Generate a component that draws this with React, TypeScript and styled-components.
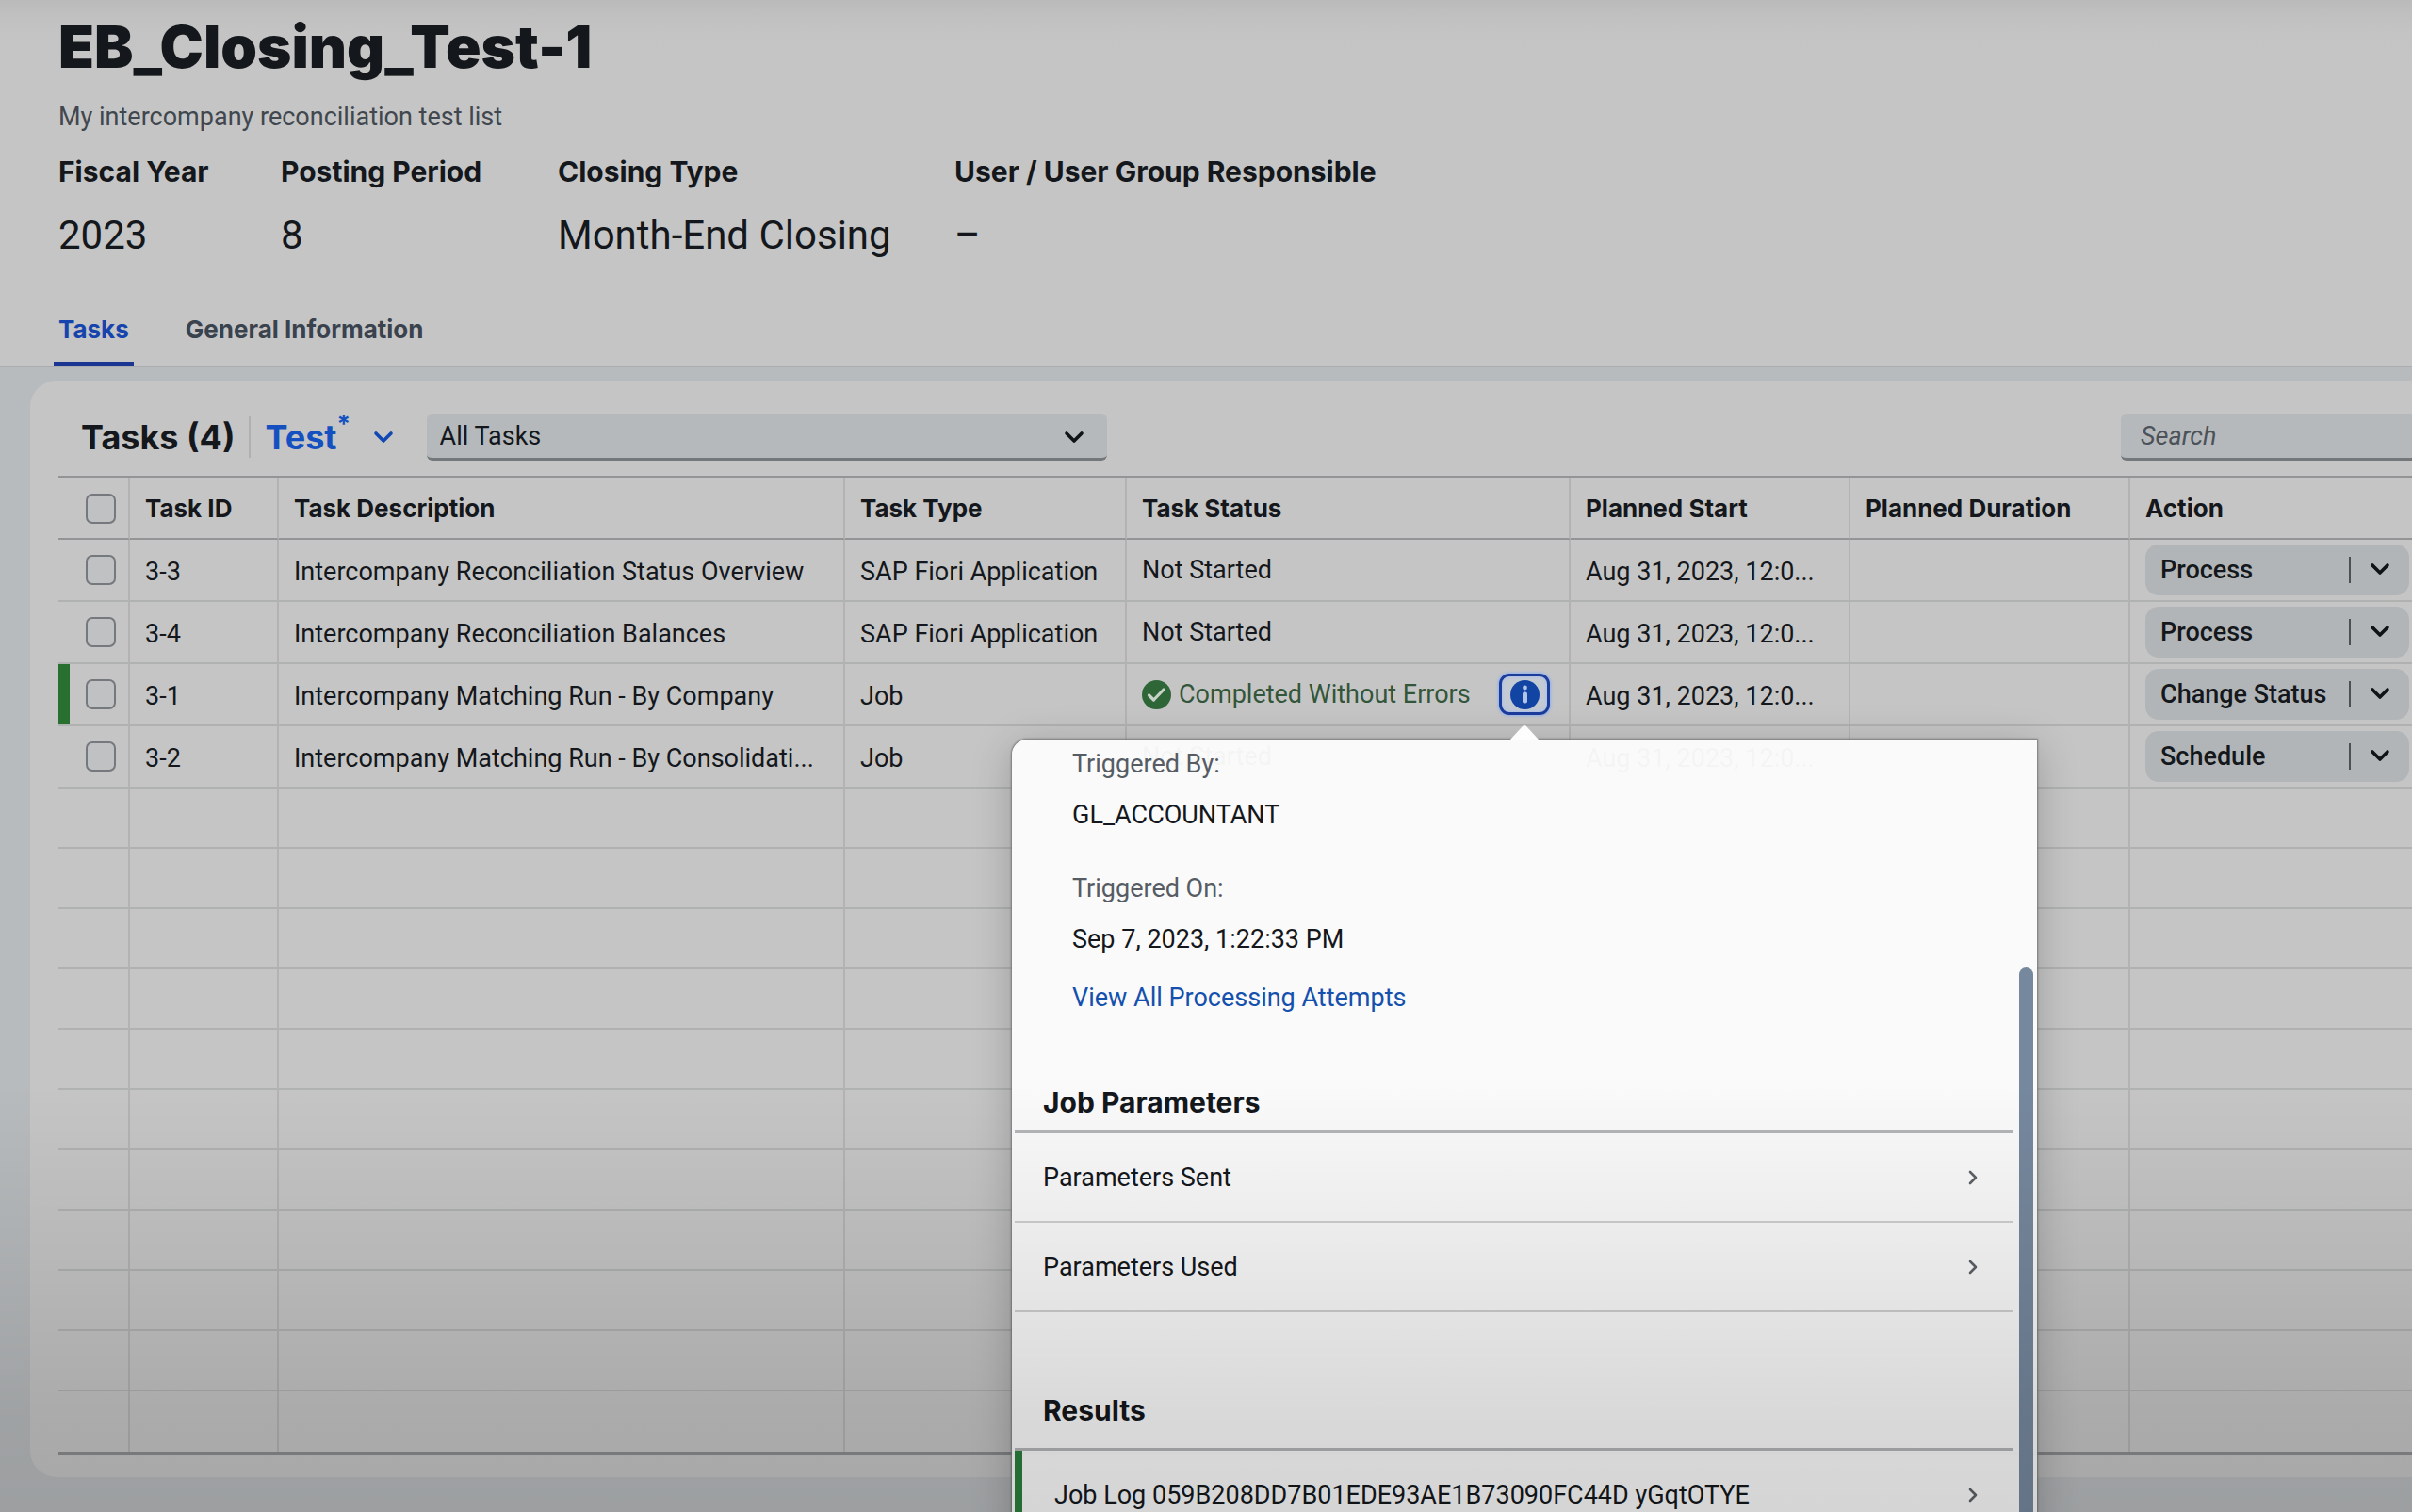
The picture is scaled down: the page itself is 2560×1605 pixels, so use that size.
import React from 'react';
import styled, { createGlobalStyle, css } from 'styled-components';

const ink = '#14171b';
const blue = '#1248b4';
const strong = 'Inter, "Open Sans", sans-serif';

const GlobalStyle = createGlobalStyle`
  *, *::before, *::after { box-sizing: border-box; }
  body {
    margin: 0;
    overflow: hidden;
    background: #b8bbbd;
    color: ${ink};
    font-family: Roboto, "Open Sans", sans-serif;
    font-size: 27px;
    line-height: 32px;
  }
  button, input, select { font: inherit; color: inherit; }
  h1, h2, h3, p, dl, dd, dt, ul { margin: 0; padding: 0; font-weight: inherit; }
`;

const Page = styled.div`
  position: relative;
  height: 100vh;
  overflow: hidden;
`;

const BottomShade = styled.div`
  position: absolute;
  inset: auto 0 0 0;
  z-index: 3;
  height: 455px;
  pointer-events: none;
  background: linear-gradient(rgba(0, 0, 0, 0), rgba(0, 0, 0, 0.075) 44%, rgba(0, 0, 0, 0.135) 77%, rgba(0, 0, 0, 0.15));
`;

const Header = styled.header`
  padding: 12px 62px 0;
  border-bottom: 2px solid #abacb0;
  background: linear-gradient(#bababa, #bfbfbf 12px, #c4c4c4 36px, #c5c5c5 70px);
`;

const Title = styled.h1`
  font-family: ${strong};
  font-size: 62px;
  line-height: 76px;
  font-weight: 900;
`;

const Subtitle = styled.p`
  padding-top: 20px;
  color: #41474e;
`;

const Facts = styled.dl`
  display: grid;
  grid-template-columns: 236px 294px 421px auto;
  padding-top: 22px;
`;

const FactLabel = styled.dt`
  font-family: ${strong};
  font-size: 30px;
  line-height: 40px;
  font-weight: 700;
`;

const FactValue = styled.dd`
  padding-top: 20px;
  font-size: 42px;
  line-height: 56px;
`;

const TabBar = styled.nav`
  display: flex;
  gap: 50px;
  padding-top: 44px;
  margin-left: -5px;
`;

const Tab = styled.button<{ $active?: boolean }>`
  border: 0;
  border-bottom: 4px solid ${(p) => (p.$active ? '#1a3692' : 'transparent')};
  padding: 12px 5px 18px;
  background: none;
  font-family: ${strong};
  font-size: 26px;
  font-weight: 700;
  color: ${(p) => (p.$active ? '#1644ae' : '#39424d')};
`;

const Card = styled.section`
  margin: 14px 0 0 32px;
  padding: 35px 0 24px 30px;
  border-radius: 28px 0 0 28px;
  background: #c5c5c5;
`;

const Toolbar = styled.div`
  display: flex;
  align-items: center;
  padding-left: 24px;
  height: 50px;
  margin-bottom: 16px;
`;

const ToolbarTitle = styled.h2`
  font-family: ${strong};
  font-size: 36px;
  line-height: 44px;
  font-weight: 700;
  padding-right: 14px;
  border-right: 2px solid #b0b0b2;
`;

const VariantButton = styled.button`
  display: flex;
  align-items: center;
  flex: none;
  width: 187px;
  border: 0;
  padding: 0 0 0 16px;
  background: none;
  font-family: ${strong};
  font-size: 36px;
  line-height: 44px;
  font-weight: 700;
  color: #1450c0;

  sup {
    align-self: flex-start;
    width: 38px;
    font-size: 26px;
    line-height: 16px;
    text-align: left;
  }
`;

const field = css`
  height: 50px;
  border: 0;
  border-bottom: 3px solid #75787b;
  border-radius: 6px;
  background: #b6b9bb;
`;

const SelectWrap = styled.div`
  display: grid;
  align-items: center;
  width: 722px;

  > * { grid-area: 1 / 1; }
  > svg { justify-self: end; margin-right: 24px; pointer-events: none; }
`;

const FilterSelect = styled.select`
  ${field}
  width: 100%;
  padding: 0 14px;
  appearance: none;
`;

const SearchInput = styled.input`
  ${field}
  width: 309px;
  margin-left: auto;
  padding: 0 21px;
  border-radius: 6px 0 0 6px;

  &::placeholder { color: #4c5259; font-style: italic; opacity: 1; }
`;

const TaskTable = styled.table`
  width: 100%;
  table-layout: fixed;
  border-collapse: separate;
  border-spacing: 0;
  border-top: 2px solid #929496;
  border-bottom: 3px solid #8b8d8f;
`;

const Col = styled.col<{ $w?: number }>`
  width: ${(p) => (p.$w ? `${p.$w}px` : 'auto')};
`;

const cell = css`
  padding: 0 16px;
  text-align: left;
  white-space: nowrap;
  border-right: 2px solid #b3b3b4;
  &:last-child { border-right: 0; padding-right: 0; }
`;

const HeadCell = styled.th`
  ${cell}
  height: 66px;
  padding-top: 2px;
  font-family: ${strong};
  font-size: 26px;
  font-weight: 700;
  border-bottom: 2px solid #929496;
`;

const Cell = styled.td<{ $open?: boolean; $text?: boolean; $marked?: boolean }>`
  ${cell}
  height: 66px;
  padding-top: ${(p) => (p.$text ? '3px' : '0')};
  border-bottom: 2px solid #b0b1b1;
  overflow: ${(p) => (p.$open ? 'visible' : 'hidden')};
  text-overflow: ellipsis;
  box-shadow: ${(p) => (p.$marked ? 'inset 12px 0 #27702f' : 'none')};
`;

const EmptyCell = styled.td`
  ${cell}
  height: 64px;
  border-bottom: 2px solid #b0b1b1;
  tr:last-child > & { border-bottom: 0; }
`;

const Check = styled.input`
  display: block;
  appearance: none;
  width: 32px;
  height: 32px;
  margin: 0 0 0 13px;
  border: 2px solid #75787c;
  border-radius: 7px;
  background: #bfc1c2;
`;

const StatusLine = styled.div`
  display: flex;
  align-items: center;
`;

const StatusOk = styled.span`
  display: flex;
  align-items: center;
  gap: 8px;
  color: #33553a;
`;

const PopoverAnchor = styled.div`
  position: relative;
  margin-left: auto;
  margin-right: 4px;
`;

const InfoButton = styled.button`
  display: flex;
  align-items: center;
  justify-content: center;
  width: 54px;
  height: 44px;
  padding: 0;
  border: 3px solid #1c3c9c;
  border-radius: 11px;
  background: #c4cad4;
  box-shadow: 0 0 3px 1px #8fb0ee, inset 0 0 3px 1px #a9c0ee;
`;

const Popover = styled.aside`
  position: absolute;
  top: 70px;
  left: 50%;
  z-index: 2;
  width: 1088px;
  margin-left: -544px;
  padding: 0 26px 0 3px;
  border-radius: 16px 0 0 0;
  background: rgba(252, 252, 252, 0.97);
  box-shadow: 0 0 2px 1px #77797c, 0 8px 44px rgba(0, 0, 0, 0.22);
  white-space: nowrap;
`;

const Arrow = styled.svg`
  position: absolute;
  top: -16px;
  left: 50%;
  margin-left: -16px;
`;

const ScrollThumb = styled.div`
  position: absolute;
  top: 242px;
  right: 4px;
  bottom: 0;
  width: 15px;
  border-radius: 8px;
  background: #76889e;
`;

const Trigger = styled.dl`
  padding: 10px 0 0 61px;
`;

const TriggerLabel = styled.dt`
  color: #555c64;
`;

const TriggerValue = styled.dd`
  padding: 22px 0 46px;
  &:last-child { padding-bottom: 30px; }
`;

const AttemptsLink = styled.a`
  display: block;
  padding-left: 61px;
  color: #1450ae;
  text-decoration: none;
`;

const GroupTitle = styled.h3<{ $above: number; $below: number }>`
  padding: ${(p) => p.$above}px 0 ${(p) => p.$below}px 30px;
  font-family: ${strong};
  font-size: 30px;
  line-height: 40px;
  font-weight: 700;
  border-bottom: 3px solid #b4b5b6;
`;

const NavList = styled.ul`
  list-style: none;
`;

const NavItem = styled.button<{ $ok?: boolean }>`
  display: flex;
  align-items: center;
  justify-content: space-between;
  width: 100%;
  height: 95px;
  border: 0;
  border-bottom: 2px solid #d0d0d0;
  padding: 0 36px 0 ${(p) => (p.$ok ? 34 : 30)}px;
  border-left: ${(p) => (p.$ok ? '8px solid #2a7f3c' : '0')};
  background: none;
`;

const Split = styled.div`
  display: flex;
  align-items: center;
  width: 280px;
  height: 54px;
  border-radius: 14px;
  background: #b2b5b7;
`;

const SplitMain = styled.button`
  flex: 1;
  height: 28px;
  padding: 0 0 0 16px;
  border: 0;
  border-right: 2px solid #4c5054;
  background: none;
  text-align: left;
  line-height: 28px;
  font-weight: 500;
`;

const SplitMenu = styled.button`
  display: flex;
  align-items: center;
  justify-content: center;
  width: 62px;
  height: 54px;
  border: 0;
  padding: 0 0 2px;
  background: none;
`;

const ChevronDown = ({ color = '#101316' }: { color?: string }) => (
  <svg width="22" height="14" viewBox="0 0 22 14" fill="none" stroke={color} strokeWidth="3.6" strokeLinecap="round" strokeLinejoin="round">
    <path d="M3 3l8 8 8-8" />
  </svg>
);

const ChevronRight = () => (
  <svg width="12" height="16" viewBox="0 0 12 16" fill="none" stroke="#5d6268" strokeWidth="2.6" strokeLinecap="round" strokeLinejoin="round">
    <path d="M3 2l6 6-6 6" />
  </svg>
);

const OkIcon = () => (
  <svg width="31" height="31" viewBox="0 0 31 31">
    <circle cx="15.5" cy="15.5" r="15.5" fill="#2f6638" />
    <path d="M7.5 16l5 5L23 10" fill="none" stroke="#c6d3c6" strokeWidth="3.2" strokeLinecap="round" strokeLinejoin="round" />
  </svg>
);

const InfoIcon = () => (
  <svg width="31" height="31" viewBox="0 0 31 31">
    <circle cx="15.5" cy="15.5" r="15.5" fill="#1244a4" />
    <circle cx="15.5" cy="8" r="2.4" fill="#b4c6e6" />
    <rect x="13" y="12.5" width="5" height="12" rx="2" fill="#b4c6e6" />
  </svg>
);

type Task = { id: string; description: string; type: string; status: string; start: string; action: string; done?: boolean };

const tasks: Task[] = [
  { id: '3-3', description: 'Intercompany Reconciliation Status Overview', type: 'SAP Fiori Application', status: 'Not Started', start: 'Aug 31, 2023, 12:0...', action: 'Process' },
  { id: '3-4', description: 'Intercompany Reconciliation Balances', type: 'SAP Fiori Application', status: 'Not Started', start: 'Aug 31, 2023, 12:0...', action: 'Process' },
  { id: '3-1', description: 'Intercompany Matching Run - By Company', type: 'Job', status: 'Completed Without Errors', start: 'Aug 31, 2023, 12:0...', action: 'Change Status', done: true },
  { id: '3-2', description: 'Intercompany Matching Run - By Consolidati...', type: 'Job', status: 'Not Started', start: 'Aug 31, 2023, 12:0...', action: 'Schedule' },
];

const facts = [
  ['Fiscal Year', '2023'],
  ['Posting Period', '8'],
  ['Closing Type', 'Month-End Closing'],
  ['User / User Group Responsible', '–'],
];

const headings = ['Task ID', 'Task Description', 'Task Type', 'Task Status', 'Planned Start', 'Planned Duration', 'Action'];
const widths = [76, 158, 601, 299, 471, 297, 297];

const JobPopover = () => (
  <Popover role="dialog" aria-label="Job details">
    <Arrow width="32" height="17" viewBox="0 0 32 17">
      <path d="M0 17L14 2q2-2 4 0l14 15z" fill="#fdfdfd" />
    </Arrow>
    <Trigger>
      <TriggerLabel>Triggered By:</TriggerLabel>
      <TriggerValue>GL_ACCOUNTANT</TriggerValue>
      <TriggerLabel>Triggered On:</TriggerLabel>
      <TriggerValue>Sep 7, 2023, 1:22:33 PM</TriggerValue>
    </Trigger>
    <AttemptsLink href="#attempts">View All Processing Attempts</AttemptsLink>
    <GroupTitle $above={75} $below={10}>Job Parameters</GroupTitle>
    <NavList>
      <li><NavItem>Parameters Sent<ChevronRight /></NavItem></li>
      <li><NavItem>Parameters Used<ChevronRight /></NavItem></li>
    </NavList>
    <GroupTitle $above={84} $below={20}>Results</GroupTitle>
    <NavList>
      <li><NavItem $ok>Job Log 059B208DD7B01EDE93AE1B73090FC44D yGqtOTYE<ChevronRight /></NavItem></li>
    </NavList>
    <ScrollThumb />
  </Popover>
);

const TaskRow = ({ task }: { task: Task }) => (
  <tr>
    <Cell $marked={task.done}><Check type="checkbox" aria-label={`Select task ${task.id}`} /></Cell>
    <Cell $text>{task.id}</Cell>
    <Cell $text>{task.description}</Cell>
    <Cell $text>{task.type}</Cell>
    <Cell $open={task.done}>
      {task.done ? (
        <StatusLine>
          <StatusOk><OkIcon />{task.status}</StatusOk>
          <PopoverAnchor>
            <InfoButton aria-label="Show job details"><InfoIcon /></InfoButton>
            <JobPopover />
          </PopoverAnchor>
        </StatusLine>
      ) : task.status}
    </Cell>
    <Cell $text>{task.start}</Cell>
    <Cell />
    <Cell>
      <Split>
        <SplitMain>{task.action}</SplitMain>
        <SplitMenu aria-label={`More actions for ${task.id}`}><ChevronDown /></SplitMenu>
      </Split>
    </Cell>
  </tr>
);

export default function App() {
  return (
    <>
      <GlobalStyle />
      <Page>
        <Header>
          <Title>EB_Closing_Test-1</Title>
          <Subtitle>My intercompany reconciliation test list</Subtitle>
          <Facts>
            {facts.map(([label, value]) => (
              <div key={label}>
                <FactLabel>{label}</FactLabel>
                <FactValue>{value}</FactValue>
              </div>
            ))}
          </Facts>
          <TabBar>
            <Tab $active>Tasks</Tab>
            <Tab>General Information</Tab>
          </TabBar>
        </Header>
        <Card>
          <Toolbar>
            <ToolbarTitle>Tasks (4)</ToolbarTitle>
            <VariantButton>Test<sup>*</sup><ChevronDown color={blue} /></VariantButton>
            <SelectWrap>
              <FilterSelect aria-label="Task filter"><option>All Tasks</option></FilterSelect>
              <ChevronDown />
            </SelectWrap>
            <SearchInput type="text" placeholder="Search" aria-label="Search" />
          </Toolbar>
          <TaskTable>
            <colgroup>
              {widths.map((w, i) => <Col key={i} $w={w} />)}
              <Col />
            </colgroup>
            <thead>
              <tr>
                <HeadCell><Check type="checkbox" aria-label="Select all tasks" /></HeadCell>
                {headings.map((h) => <HeadCell key={h}>{h}</HeadCell>)}
              </tr>
            </thead>
            <tbody>
              {tasks.map((t) => <TaskRow key={t.id} task={t} />)}
              {Array.from({ length: 11 }, (_, r) => (
                <tr key={r}>
                  {Array.from({ length: 8 }, (_, c) => <EmptyCell key={c} />)}
                </tr>
              ))}
            </tbody>
          </TaskTable>
        </Card>
        <BottomShade />
      </Page>
    </>
  );
}
